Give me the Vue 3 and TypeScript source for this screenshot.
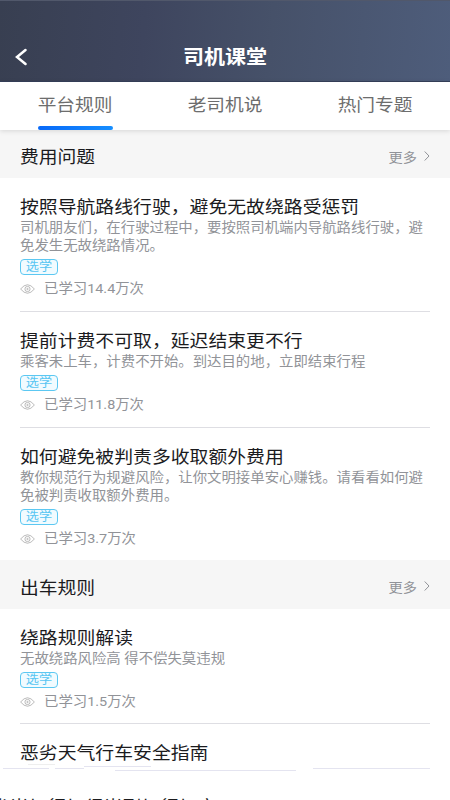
<script setup lang="ts">
interface Lesson { title: string; desc?: string[]; count?: string }
interface Section { name: string; lessons: Lesson[] }

const tabs: string[] = ['平台规则', '老司机说', '热门专题']
const sections: Section[] = [
  {
    name: '费用问题',
    lessons: [
      { title: '按照导航路线行驶，避免无故绕路受惩罚', desc: ['司机朋友们，在行驶过程中，要按照司机端内导航路线行驶，避', '免发生无故绕路情况。'], count: '14.4' },
      { title: '提前计费不可取，延迟结束更不行', desc: ['乘客未上车，计费不开始。到达目的地，立即结束行程'], count: '11.8' },
      { title: '如何避免被判责多收取额外费用', desc: ['教你规范行为规避风险，让你文明接单安心赚钱。请看看如何避', '免被判责收取额外费用。'], count: '3.7' },
    ],
  },
  {
    name: '出车规则',
    lessons: [
      { title: '绕路规则解读', desc: ['无故绕路风险高 得不偿失莫违规'], count: '1.5' },
      { title: '恶劣天气行车安全指南' },
    ],
  },
]
</script>

<template>
  <main class="page">
    <header class="header">
      <svg class="back" viewBox="0 0 12 18"><path d="M10.500 2 2 9l8.500 7" /></svg>
      <h1><span class="txt">司机课堂</span></h1>
    </header>
    <nav class="tabs">
      <div v-for="(tab, i) in tabs" :key="tab" class="tab" :class="{ active: i === 0 }">
        <span class="txt">{{ tab }}</span>
      </div>
    </nav>
    <section v-for="section in sections" :key="section.name" class="section">
      <div class="section-head">
        <h2><span class="txt">{{ section.name }}</span></h2>
        <div class="more">
          <span class="txt">更多</span>
          <svg viewBox="0 0 6 10"><path d="M.7.5 5 5 .7 9.500" /></svg>
        </div>
      </div>
      <article v-for="lesson in section.lessons" :key="lesson.title" class="lesson">
        <h3><span class="txt">{{ lesson.title }}</span></h3>
        <p v-for="line in lesson.desc" :key="line"><span class="txt">{{ line }}</span></p>
        <div v-if="lesson.count" class="tag"><span class="txt">选学</span></div>
        <div v-if="lesson.count" class="views">
          <svg viewBox="0 0 15 10"><path d="M.6 5Q7.500-3.500 14.400 5 7.500 13.500.6 5Z" /><circle cx="7.500" cy="5" r="2.600" /><circle cx="7.500" cy="5" r=".7" /></svg>
          <span class="txt">已学习{{ lesson.count }}万次</span>
        </div>
      </article>
    </section>
    <div class="strokes"><i class="a" /><i class="b" /><i class="c" /><i class="d" /><i class="e" /><i class="f" /></div>
    <div class="next"><span class="txt">劣尚匕行匕得尚到匕行匕方</span></div>
  </main>
</template>

<style>
body { margin: 0; overflow: hidden; }
</style>

<style scoped>
.page { position: relative; width: 450px; height: 800px; overflow: hidden; background: #fff; font-family: Roboto, "Noto Sans CJK SC", sans-serif; color: #1b1b1e; }
h1, h2, h3, p { margin: 0; font-weight: 400; }
.txt { display: inline-block; white-space: nowrap; transform: scaleY(.91); }
.header { box-sizing: border-box; height: 82px; padding-top: 31px; display: grid; grid-template-columns: 50px 350px 50px; align-items: center; background: linear-gradient(95deg, #383f51, #3e455e 32%, #465169 60%, #4e5d7b); border-top: 1px solid #51586b; border-bottom: 1px solid #35405a; }
.back { width: 12px; height: 18px; margin-left: 15px; fill: none; stroke: #fff; stroke-width: 2.500; stroke-linecap: round; }
h1 { padding-top: 2px; text-align: center; font-size: 21px; font-weight: 700; line-height: 30px; color: #fff; }
.tabs { height: 48px; display: grid; grid-template-columns: repeat(3, 1fr); position: relative; box-shadow: 0 1px 5px #0002; }
.tab { display: flex; flex-direction: column; align-items: center; justify-content: space-between; font-size: 18.700px; line-height: 48px; height: 48px; color: #6d6d6d; }
.tab.active::after { content: ""; flex: none; width: 75px; height: 4px; margin-top: -4px; border-radius: 2px; background: linear-gradient(90deg, #0869f8, #168eff); }
.section-head { box-sizing: border-box; height: 48px; padding: 0 20px; display: flex; align-items: center; justify-content: space-between; background: #f6f6f6; }
.section:nth-of-type(2) .section-head { height: 49px; }
h2 { font-size: 18.800px; line-height: 28px; padding-top: 8px; }
.more { display: flex; align-items: center; gap: 8px; font-size: 14.200px; line-height: 20px; color: #919398; padding-top: 5px; }
.more .txt { margin-right: -1px; }
.more svg { width: 6px; height: 10px; margin-bottom: 2px; fill: none; stroke: #919398; stroke-width: 1; }
.lesson { margin: 0 20px; padding: 18px 0 13px; border-bottom: 1px solid #dedee3; }
.section:nth-of-type(1) .lesson:last-child { border: 0; padding-bottom: 12px; }
.section:nth-of-type(2) .lesson { padding-bottom: 12px; }
.section:nth-of-type(2) .lesson:last-child { border: 0; }
h3 { font-size: 18.850px; line-height: 23px; height: 22px; }
p { font-size: 14.400px; line-height: 19px; height: 18px; color: #919398; }
.tag { box-sizing: border-box; width: 38px; height: 16px; margin-top: 5px; border: 1.500px solid #5cc8f2; border-radius: 4px; background: #f1fbff; color: #56c5f2; font-size: 13.200px; line-height: 13px; text-align: center; }
.views { height: 20px; margin-top: 3px; display: flex; align-items: center; gap: 9px; font-size: 14.400px; line-height: 20px; color: #919398; }
.views .txt { padding-top: 2px; }
.views svg { width: 15px; height: 10px; margin-top: 1px; fill: none; stroke: #aaa; stroke-width: .8; }
.strokes i { position: absolute; height: 1px; background: #e4e4f0; }
.strokes .a { left: 3px; width: 46px; top: 768px; }
.strokes .b { left: 55px; width: 29px; top: 768px; }
.strokes .c { left: 84px; width: 67px; top: 766px; }
.strokes .d { left: 115px; width: 181px; top: 770px; }
.strokes .e { left: 313px; width: 117px; top: 768px; }
.strokes .f { left: 28px; width: 27px; top: 764px; background: #eee; }
.next { position: absolute; left: -9px; top: 797px; font-size: 18.800px; line-height: 22px; }
</style>
